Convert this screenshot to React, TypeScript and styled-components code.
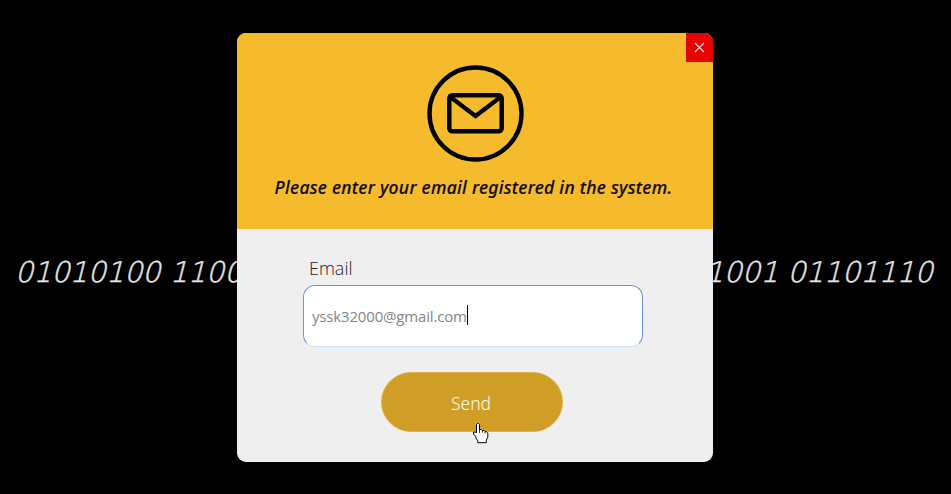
import React from "react";
import styled, { createGlobalStyle } from "styled-components";

const GlobalStyle = createGlobalStyle`
  * { box-sizing: border-box; }
  body { margin: 0; background: #000; overflow: hidden; }
`;

const Stage = styled.div`
  display: grid;
  width: 951px;
  height: 494px;
  background: #000;
  overflow: hidden;
`;

const BinaryLine = styled.div`
  grid-area: 1 / 1;
  display: flex;
  justify-content: space-between;
  align-self: start;
  margin: 255px 18px 0 15px;
  font: italic 200 28.6px/34px "DejaVu Sans Light", "DejaVu Sans", sans-serif;
  color: #e4e4e4;
  -webkit-text-stroke: 0.5px #e4e4e4;
  white-space: pre;
`;

const Dialog = styled.section`
  grid-area: 1 / 1;
  position: relative;
  display: flex;
  flex-direction: column;
  width: 476px;
  height: 429px;
  margin: 33px 0 0 237px;
  border-radius: 9px;
  background: #efefef;
  overflow: hidden;
  font-family: "Open Sans", "Noto Sans", sans-serif;
`;

const Header = styled.header`
  display: flex;
  flex-direction: column;
  align-items: center;
  height: 196px;
  padding-top: 31px;
  background: #f6bb2d;
`;

const Prompt = styled.h1`
  margin: 12px 0 0;
  padding-right: 3px;
  font: italic 500 17.5px/26px "Noto Sans", sans-serif;
  letter-spacing: 0.29px;
  color: #120c02;
  -webkit-text-stroke: 0.2px #120c02;
  white-space: nowrap;
`;

const CloseButton = styled.button`
  position: absolute;
  top: 0;
  right: 0;
  display: grid;
  place-items: center;
  width: 27px;
  height: 29px;
  padding: 0;
  border: 1px solid #cf0c00;
  background: #eb0000;
`;

const Form = styled.form`
  display: flex;
  flex-direction: column;
  padding: 27px 0 0 66px;
`;

const Label = styled.label`
  height: 29px;
  padding-left: 6px;
  font-size: 18px;
  line-height: 25px;
  font-weight: 300;
  color: #222;
`;

const Field = styled.div`
  display: flex;
  align-items: center;
  width: 340px;
  height: 62px;
  padding-left: 8px;
  border: 1px solid #6c94d8;
  border-bottom-color: #c9e4f7;
  border-radius: 12px;
  background: #fff;
`;

const Value = styled.span`
  font-size: 15px;
  line-height: 20px;
  letter-spacing: -0.17px;
  color: #858585;
`;

const Caret = styled.span`
  width: 1px;
  height: 20px;
  margin-top: -2px;
  background: #000;
`;

const SendButton = styled.button`
  position: relative;
  width: 182px;
  height: 60px;
  margin: 25px 0 0 78px;
  padding: 2px 2px 0 0;
  border: 1px solid #dfb24a;
  border-radius: 30px;
  background: #d09e26;
  color: #fff8e6;
  font: 300 17.5px/24px "Noto Sans", sans-serif;
`;

const Pointer = styled.svg`
  position: absolute;
  left: 91px;
  top: 49px;
`;

function MailIcon() {
  return (
    <svg width="98" height="98" viewBox="0 0 98 98" fill="none" stroke="#000">
      <circle cx="49.5" cy="49.5" r="46" strokeWidth="4.4" />
      <rect x="23.3" y="31.3" width="52.4" height="36" rx="3" strokeWidth="4.5" />
      <path d="M25 33.5 49.5 52 74 33.5" strokeWidth="4.2" />
    </svg>
  );
}

function HandPointer() {
  return (
    <Pointer width="18" height="24" viewBox="0 0 18 24">
      <path
        d="M4.5 1.5h1l1 1v5h1.8l1 1h1.8l1 1h1.2l1.5 1.7v4l-1.5 3v2.5H4.8v-2L2.8 16v-1.5L.5 12v-2h2l1 1V2.5Z"
        fill="#fff"
        stroke="#000"
      />
      <path d="M6.5 7v4M9.5 8.5v2M12 9.5v2" stroke="#000" strokeWidth=".8" />
    </Pointer>
  );
}

export default function App() {
  return (
    <>
      <GlobalStyle />
      <Stage>
        <BinaryLine>
          <span>01010100 1100</span>
          <span>1001 01101110</span>
        </BinaryLine>
        <Dialog>
          <Header>
            <MailIcon />
            <Prompt>Please enter your email registered in the system.</Prompt>
          </Header>
          <CloseButton type="button" aria-label="Close">
            <svg width="11" height="11" viewBox="0 0 11 11">
              <path d="M1 1 10 10M10 1 1 10" stroke="#ffdada" strokeWidth="1.1" />
            </svg>
          </CloseButton>
          <Form>
            <Label>Email</Label>
            <Field>
              <Value>yssk32000@gmail.com</Value>
              <Caret />
            </Field>
            <SendButton type="button">
              Send
              <HandPointer />
            </SendButton>
          </Form>
        </Dialog>
      </Stage>
    </>
  );
}
